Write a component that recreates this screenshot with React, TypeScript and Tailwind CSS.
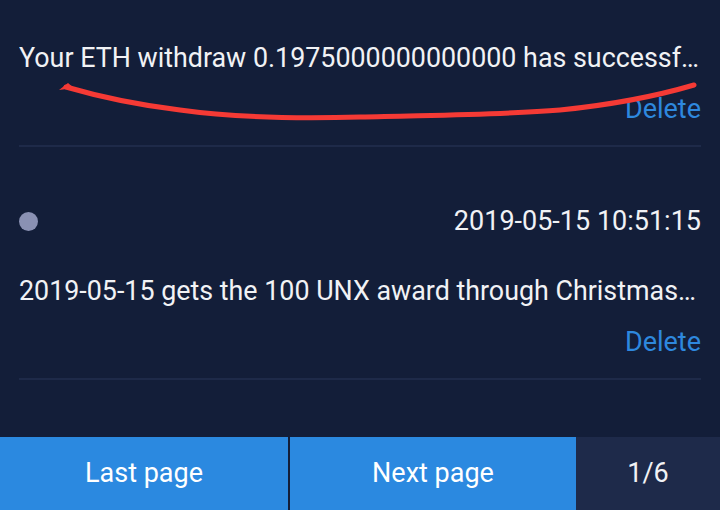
import React from "react";

type Notice = { id: number; time: string; text: string };

const notices: Notice[] = [
  { id: 1, time: "2019-05-15 11:02:48", text: "Your ETH withdraw 0.1975000000000000 has successfully arrived in your wallet" },
  { id: 2, time: "2019-05-15 10:51:15", text: "2019-05-15 gets the 100 UNX award through Christmas activity" },
  { id: 3, time: "2019-05-14 18:20:03", text: "2019-05-14 gets the 100 UNX award through Christmas activity" },
];

function NoticeItem({ n }: { n: Notice }) {
  return (
    <div className="border-b-2 border-[#1e2a49] pt-[58px] pb-[20px]">
      <div className="flex h-[32px] items-center justify-between">
        <span className="h-[19px] w-[19px] rounded-full bg-[#8a91b3]" />
        <span className="text-[27px] leading-[32px] text-[#f1f2f5]">{n.time}</span>
      </div>
      <p className="mt-[38px] truncate text-[26.85px] leading-[32px] text-[#f1f2f5]">{n.text}</p>
      <div className="mt-[19px] flex justify-end">
        <button className="text-[27px] leading-[32px] text-[#2e88de]">Delete</button>
      </div>
    </div>
  );
}

export default function App() {
  return (
    <div
      className="relative flex h-[510px] w-[720px] flex-col overflow-hidden bg-[#131e39]"
      style={{ fontFamily: "Roboto, 'Noto Sans', sans-serif" }}
    >
      <div className="flex-1 overflow-hidden px-[19px]">
        <div className="-mt-[86px]">
          {notices.map((n) => (
            <NoticeItem key={n.id} n={n} />
          ))}
        </div>
      </div>

      <div className="flex h-[73px] text-[27px] text-white">
        <button className="flex w-[288px] items-center justify-center bg-[#2b89e0]">Last page</button>
        <button className="flex w-[288px] items-center justify-center border-l-2 border-[#131e39] bg-[#2b89e0]">
          Next page
        </button>
        <div className="flex flex-1 items-center justify-center bg-[#1e2a4a] text-[#f1f2f5]">1/6</div>
      </div>

      {/* red marker stroke drawn over the screenshot */}
      <svg className="pointer-events-none absolute left-0 top-0" width="720" height="510" viewBox="0 0 720 510">
        <path d="M59,90 L68,83 L74,88 Z" fill="#f53a35" />
        <path
          d="M66,87 C90,94 130,104 180,110 C230,117 290,119 360,117 C430,115 500,115 560,110 C620,104 660,95 694,85"
          fill="none"
          stroke="#f53a35"
          strokeWidth="5"
          strokeLinecap="round"
        />
      </svg>
    </div>
  );
}
